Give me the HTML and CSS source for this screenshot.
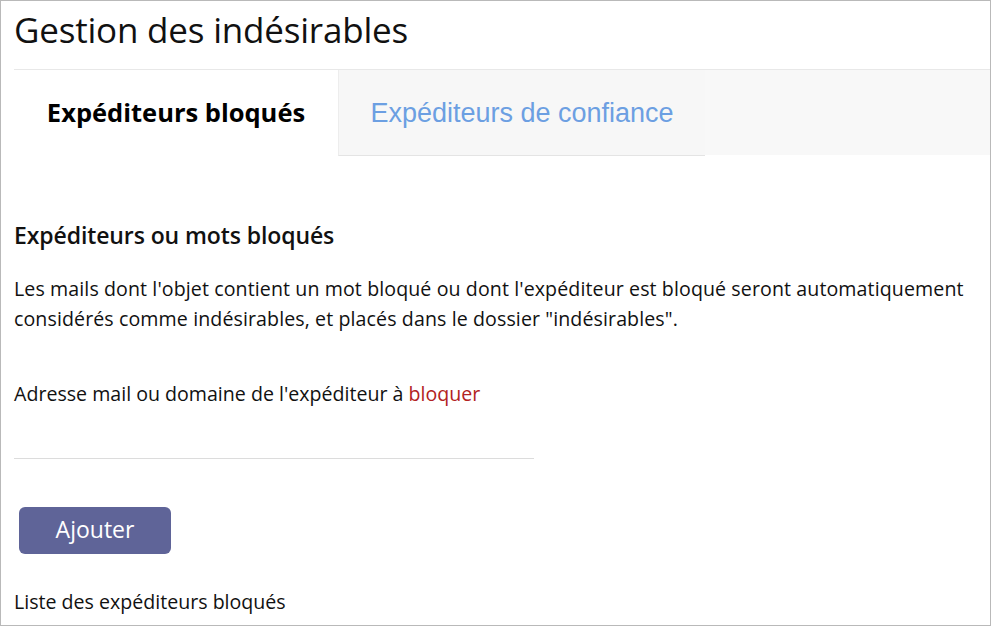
FILE: index.html
```html
<!DOCTYPE html>
<html lang="fr">
<head>
<meta charset="utf-8">
<title>Gestion des indésirables</title>
<link rel="stylesheet" href="styles.css">
</head>
<body>
<div class="frame">
  <h1 class="title">Gestion des indésirables</h1>
  <div class="tabs">
    <div class="tab tab-active">Expéditeurs bloqués</div>
    <div class="tab tab-other">Expéditeurs de confiance</div>
    <div class="tab-fill"></div>
  </div>
  <div class="content">
    <h2 class="section-title">Expéditeurs ou mots bloqués</h2>
    <p class="desc">Les mails dont l'objet contient un mot bloqué ou dont l'expéditeur est bloqué seront automatiquement considérés comme indésirables, et placés dans le dossier "indésirables".</p>
    <label class="field-label">Adresse mail ou domaine de l'expéditeur à <span class="accent">bloquer</span></label>
    <div class="field"></div>
    <button class="btn">Ajouter</button>
    <div class="list-label">Liste des expéditeurs bloqués</div>
  </div>
</div>
</body>
</html>
```

FILE: styles.css
```css
html, body {
  margin: 0;
  padding: 0;
  background: #ffffff;
}
.frame {
  box-sizing: border-box;
  width: 991px;
  height: 626px;
  border: 1px solid #b9b9b9;
  padding-left: 13px;
  overflow: hidden;
  font-family: "Open Sans", "Noto Sans", sans-serif;
  color: #111;
}
.title {
  margin: 0;
  height: 68px;
  font-size: 35px;
  font-weight: 400;
  line-height: 58px;
  letter-spacing: -0.2px;
}
.tabs {
  display: flex;
  border-top: 1px solid #e8e8e8;
  height: 86px;
}
.tab {
  display: flex;
  align-items: center;
  justify-content: center;
  box-sizing: border-box;
  height: 86px;
}
.tab-active {
  width: 324px;
  background: #fff;
  font-weight: 700;
  font-size: 25.5px;
  padding-bottom: 3px;
  color: #000;
}
.tab-other {
  width: 367px;
  background: #f7f7f7;
  border-left: 1px solid #ededed;
  border-bottom: 1px solid #e4e4e4;
  color: #6c9fe2;
  font-family: "Liberation Sans", Arial, sans-serif;
  font-size: 27px;
  padding-top: 2px;
}
.tab-fill {
  flex: 1;
  background: #f8f8f8;
  height: 85px;
}
.content {
  padding-top: 64px;
}
.section-title {
  margin: 0;
  font-size: 23px;
  font-weight: 600;
  line-height: 30px;
  letter-spacing: -0.1px;
}
.desc {
  margin: 24px 0 0;
  font-size: 19.6px;
  line-height: 30px;
  letter-spacing: 0.1px;
  width: 970px;
}
.field-label {
  display: block;
  margin-top: 45px;
  font-size: 19.6px;
  line-height: 30px;
}
.accent {
  color: #b22222;
}
.field {
  width: 520px;
  height: 49px;
  border-bottom: 1px solid #dcdcdc;
}
.btn {
  display: block;
  margin: 48px 0 0 5px;
  width: 152px;
  height: 47px;
  border: none;
  border-radius: 6px;
  background: #5f6498;
  color: #fff;
  font-family: "Open Sans", "Noto Sans", sans-serif;
  font-size: 23px;
  padding: 0 0 3px;
}
.list-label {
  margin-top: 33px;
  font-size: 19.6px;
  line-height: 30px;
}
```
